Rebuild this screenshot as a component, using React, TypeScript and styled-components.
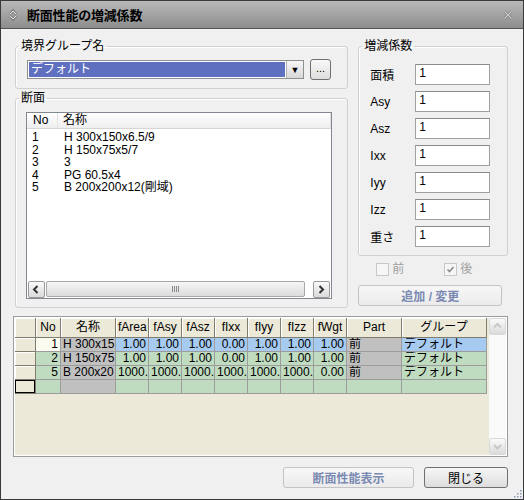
import { Fragment } from "react";
import styled, { createGlobalStyle } from "styled-components";

const GlobalStyle = createGlobalStyle`
  html, body {
    margin: 0;
    padding: 0;
    background: #f0f0f0;
  }
  body {
    font-family: "Liberation Sans", "Noto Sans CJK JP", sans-serif;
    font-size: 12px;
    color: #000;
  }
  * {
    box-sizing: border-box;
  }
`;

const Window = styled.div`
  position: relative;
  width: 524px;
  height: 500px;
  display: flex;
  flex-direction: column;
  background: #f0f0f0;
  border: 1px solid #3a3a3a;
`;

const TitleBar = styled.div`
  flex: none;
  height: 28px;
  display: flex;
  align-items: center;
  padding: 0 10px 0 7px;
  background: linear-gradient(#b9b9b9, #8d8d8d);
  border-bottom: 1px solid #555;
`;

const Title = styled.span`
  flex: 1;
  margin-left: 9px;
  font-size: 13px;
  font-weight: bold;
  letter-spacing: -0.2px;
`;

const Content = styled.div`
  flex: 1;
  display: flex;
  flex-direction: column;
  padding: 10px 15px 0 12px;
`;

const TopArea = styled.div`
  display: flex;
  gap: 10px;
  padding-left: 2px;
`;

const Column = styled.div<{ $width: number }>`
  width: ${(p) => p.$width}px;
  display: flex;
  flex-direction: column;
`;

const Group = styled.fieldset<{ $height: number; $gap?: number }>`
  margin: ${(p) => p.$gap ?? 0}px 0 0;
  padding: 0;
  min-width: 0;
  height: ${(p) => p.$height}px;
  border: 1px solid #d0d0d0;
  border-radius: 3px;
  box-shadow: inset 1px 1px 0 #fff;
`;

const Legend = styled.legend`
  margin-left: 3px;
  padding: 0 2px;
  line-height: 14px;
  font-size: 12px;
`;

const GroupBody = styled.div<{ $pad: string }>`
  padding: ${(p) => p.$pad};
`;

const ComboRow = styled.div`
  display: flex;
  align-items: center;
  gap: 6px;
`;

const Combo = styled.div`
  width: 277px;
  height: 19px;
  display: flex;
  border: 1px solid #8e8f8f;
  background: #fff;
`;

const ComboValue = styled.div`
  flex: 1;
  margin: 1px;
  padding-left: 2px;
  background: #6070c0;
  color: #fff;
  line-height: 15px;
`;

const ComboArrow = styled.div`
  width: 17px;
  display: flex;
  align-items: center;
  justify-content: center;
  border-left: 1px solid #b5b5b5;
  background: linear-gradient(#f6f6f6, #d8d8d8);
  font-size: 9px;
`;

const SmallButton = styled.div`
  width: 21px;
  height: 21px;
  display: flex;
  align-items: center;
  justify-content: center;
  border: 1px solid #707070;
  border-radius: 3px;
  background: linear-gradient(#f8f8f8, #dedede);
  font-size: 11px;
  padding-bottom: 3px;
`;

const ListBox = styled.div`
  width: 306px;
  height: 187px;
  display: flex;
  flex-direction: column;
  border: 1px solid #828790;
  background: #fff;
`;

const ListHead = styled.div`
  height: 16px;
  display: grid;
  grid-template-columns: 31px 1fr;
  background: linear-gradient(#fff, #eeeeee);
  border-bottom: 1px solid #d5d5d5;
  line-height: 15px;
`;

const HeadCell = styled.div<{ $pad: number }>`
  padding-left: ${(p) => p.$pad}px;
  border-right: 1px solid #e2e2e2;
`;

const ListRows = styled.div`
  flex: 1;
  padding-top: 2px;
`;

const ListRow = styled.div`
  height: 12.6px;
  display: grid;
  grid-template-columns: 31px 1fr;
  line-height: 12.6px;
`;

const ListCell = styled.div<{ $pad: number }>`
  padding-left: ${(p) => p.$pad}px;
  white-space: nowrap;
`;

const HScroll = styled.div`
  height: 17px;
  display: flex;
  align-items: stretch;
  padding: 0 1px 1px 1px;
  gap: 1px;
`;

const ScrollBtn = styled.div<{ $dim?: boolean }>`
  width: 17px;
  min-height: 17px;
  display: flex;
  align-items: center;
  justify-content: center;
  border: 1px solid ${(p) => (p.$dim ? "#d8d8d8" : "#9a9a9a")};
  border-radius: 2px;
  background: linear-gradient(#fafafa, #dadada);
`;

const Thumb = styled.div`
  width: 260px;
  display: flex;
  align-items: center;
  justify-content: center;
  border: 1px solid #a8a8a8;
  border-radius: 2px;
  background: linear-gradient(#f6f6f6, #dcdcdc);
  margin-right: 7px;
`;

const Grip = styled.div`
  width: 7px;
  height: 6px;
  background: repeating-linear-gradient(90deg, #8a8a8a 0 1px, transparent 1px 2px);
`;

const FactorGrid = styled.div`
  display: grid;
  grid-template-columns: 45px 75px;
  row-gap: 6px;
  align-items: center;
`;

const FactorLabel = styled.span`
  font-size: 12px;
`;

const FactorInput = styled.div`
  height: 21px;
  border: 1px solid #a0a0a0;
  border-top-color: #8a8a8a;
  background: #fff;
  padding: 0 3px;
  line-height: 16px;
`;

const CheckRow = styled.div`
  margin-top: 7px;
  display: flex;
  gap: 40px;
  padding-left: 18px;
  height: 13px;
`;

const CheckItem = styled.div`
  display: flex;
  align-items: center;
  gap: 3px;
  color: #a0a0a0;
  line-height: 13px;
`;

const CheckBox = styled.div`
  width: 13px;
  height: 13px;
  border: 1px solid #c8c8c8;
  background: #f6f6f6;
  display: flex;
  align-items: center;
  justify-content: center;
`;

const PushButton = styled.div<{ $width: number; $disabled?: boolean }>`
  width: ${(p) => p.$width}px;
  height: 21px;
  display: flex;
  align-items: center;
  justify-content: center;
  border: 1px solid ${(p) => (p.$disabled ? "#c4c4c4" : "#707070")};
  border-radius: 3px;
  background: ${(p) =>
    p.$disabled ? "linear-gradient(#f7f7f7, #ebebeb)" : "linear-gradient(#f6f6f6, #dddddd)"};
  color: ${(p) => (p.$disabled ? "#7b8ab2" : "#000")};
  font-weight: ${(p) => (p.$disabled ? "bold" : "normal")};
  font-size: 12px;
`;

const AddButton = styled(PushButton)`
  margin-top: 9px;
`;

const GridPanel = styled.div`
  margin-top: 8px;
  height: 141px;
  display: flex;
  border: 1px solid #9c9c9c;
  padding: 1px;
  background: #ece9d8;
  box-shadow: inset 0 0 0 1px #fff;
`;

const Sheet = styled.div`
  width: 472px;
  align-self: flex-start;
  display: grid;
  grid-template-columns: 21px 25px 55px repeat(7, 33px) 55px 85px;
  grid-template-rows: 20px repeat(4, 14px);
`;

type Tone = "head" | "rowhead" | "current" | "green" | "blue" | "gray" | "ivory";

const toneBg: Record<Tone, string> = {
  head: "#ece9d8",
  rowhead: "#ece9d8",
  current: "#ece9d8",
  green: "#c0dcc0",
  blue: "#a6caf0",
  gray: "#c0c0c0",
  ivory: "#fbfbf0",
};

const isHeader = (t: Tone) => t === "head" || t === "rowhead" || t === "current";

const Cell = styled.div<{ $tone: Tone; $align?: "left" | "right" | "center" }>`
  background: ${(p) => toneBg[p.$tone]};
  border-right: 1px solid ${(p) => (isHeader(p.$tone) ? "#7f7d70" : "#9c9c9c")};
  border-bottom: 1px solid ${(p) => (isHeader(p.$tone) ? "#7f7d70" : "#9c9c9c")};
  box-shadow: ${(p) =>
    p.$tone === "current"
      ? "inset 0 0 0 1px #000"
      : p.$tone === "head" || p.$tone === "rowhead"
      ? "inset 1px 1px 0 #fff"
      : "none"};
  text-align: ${(p) => p.$align ?? "left"};
  padding: 0 2px;
  font-size: 12px;
  line-height: ${(p) => (p.$tone === "head" ? "19px" : "13px")};
  white-space: nowrap;
  overflow: hidden;
`;

const VScroll = styled.div`
  width: 17px;
  margin-left: auto;
  display: flex;
  flex-direction: column;
  justify-content: space-between;
  background: #fafafa;
`;

const Footer = styled.div`
  margin-top: 10px;
  display: flex;
  justify-content: flex-end;
  gap: 10px;
`;

const ResizeGrip = styled.svg`
  position: absolute;
  right: 1px;
  bottom: 1px;
`;

const sections = [
  ["1", "H 300x150x6.5/9"],
  ["2", "H 150x75x5/7"],
  ["3", "3"],
  ["4", "PG 60.5x4"],
  ["5", "B 200x200x12(剛域)"],
];

const factors = ["面積", "Asy", "Asz", "Ixx", "Iyy", "Izz", "重さ"];

const headers = ["", "No", "名称", "fArea", "fAsy", "fAsz", "fIxx", "fIyy", "fIzz", "fWgt", "Part", "グループ"];

const rows = [
  { no: "1", name: "H 300x15", vals: ["1.00", "1.00", "1.00", "0.00", "1.00", "1.00", "1.00"], sel: true },
  { no: "2", name: "H 150x75", vals: ["1.00", "1.00", "1.00", "0.00", "1.00", "1.00", "1.00"], sel: false },
  { no: "5", name: "B 200x20", vals: ["1000.", "1000.", "1000.", "1000.", "1000.", "1000.", "0.00"], sel: false },
];

const Chevron = ({ dir, color = "#333" }: { dir: "left" | "right" | "up" | "down"; color?: string }) => {
  const d = {
    left: "M6.5 2 L3 5.5 L6.5 9",
    right: "M3.5 2 L7 5.5 L3.5 9",
    up: "M2 6.5 L5.5 3 L9 6.5",
    down: "M2 4 L5.5 7.5 L9 4",
  }[dir];
  return (
    <svg width="11" height="11" viewBox="0 0 11 11">
      <path d={d} fill="none" stroke={color} strokeWidth="2" />
    </svg>
  );
};

const App = () => {
  return (
    <>
      <GlobalStyle />
      <Window>
        <TitleBar>
          <svg width="10" height="12" viewBox="0 0 10 12">
            <path d="M2 5 L5 2 L8 5" fill="none" stroke="#444" strokeWidth="2.4" />
            <path d="M2 7 L5 10 L8 7" fill="none" stroke="#444" strokeWidth="2.4" />
            <path d="M2 5 L5 2 L8 5" fill="none" stroke="#eee" strokeWidth="1.1" />
            <path d="M2 7 L5 10 L8 7" fill="none" stroke="#eee" strokeWidth="1.1" />
          </svg>
          <Title>断面性能の増減係数</Title>
          <svg width="10" height="10" viewBox="0 0 10 10">
            <path d="M1.5 1.5 L8.5 8.5 M8.5 1.5 L1.5 8.5" stroke="#7c7c7c" strokeWidth="2.6" />
            <path d="M1.5 1.5 L8.5 8.5 M8.5 1.5 L1.5 8.5" stroke="#cfcfcf" strokeWidth="1.2" />
          </svg>
        </TitleBar>

        <Content>
          <TopArea>
            <Column $width={334}>
              <Group $height={50}>
                <Legend>境界グループ名</Legend>
                <GroupBody $pad="6px 0 0 11px">
                  <ComboRow>
                    <Combo>
                      <ComboValue>デフォルト</ComboValue>
                      <ComboArrow>▼</ComboArrow>
                    </Combo>
                    <SmallButton>...</SmallButton>
                  </ComboRow>
                </GroupBody>
              </Group>

              <Group $height={217} $gap={2}>
                <Legend>断面</Legend>
                <GroupBody $pad="7px 0 0 10px">
                  <ListBox>
                    <ListHead>
                      <HeadCell $pad={6}>No</HeadCell>
                      <HeadCell $pad={5}>名称</HeadCell>
                    </ListHead>
                    <ListRows>
                      {sections.map(([no, name]) => (
                        <ListRow key={no}>
                          <ListCell $pad={5}>{no}</ListCell>
                          <ListCell $pad={6}>{name}</ListCell>
                        </ListRow>
                      ))}
                    </ListRows>
                    <HScroll>
                      <ScrollBtn>
                        <Chevron dir="left" />
                      </ScrollBtn>
                      <Thumb>
                        <Grip />
                      </Thumb>
                      <ScrollBtn>
                        <Chevron dir="right" />
                      </ScrollBtn>
                    </HScroll>
                  </ListBox>
                </GroupBody>
              </Group>
            </Column>

            <Column $width={150}>
              <Group $height={217}>
                <Legend>増減係数</Legend>
                <GroupBody $pad="11px 0 0 11px">
                  <FactorGrid>
                    {factors.map((f) => (
                      <Fragment key={f}>
                        <FactorLabel>{f}</FactorLabel>
                        <FactorInput>1</FactorInput>
                      </Fragment>
                    ))}
                  </FactorGrid>
                </GroupBody>
              </Group>
              <CheckRow>
                <CheckItem>
                  <CheckBox />
                  前
                </CheckItem>
                <CheckItem>
                  <CheckBox>
                    <svg width="9" height="9" viewBox="0 0 9 9">
                      <path d="M1.5 4.5 L3.5 6.5 L7.5 2" fill="none" stroke="#8a8a8a" strokeWidth="1.6" />
                    </svg>
                  </CheckBox>
                  後
                </CheckItem>
              </CheckRow>
              <AddButton $width={144} $disabled>
                追加 / 変更
              </AddButton>
            </Column>
          </TopArea>

          <GridPanel>
            <Sheet>
              {headers.map((h, i) => (
                <Cell key={"h" + i} $tone="head" $align="center">
                  {h}
                </Cell>
              ))}
              {rows.map((r) => (
                <Fragment key={r.no}>
                  <Cell $tone="rowhead" />
                  <Cell $tone={r.sel ? "ivory" : "green"} $align="right">
                    {r.no}
                  </Cell>
                  <Cell $tone="gray">{r.name}</Cell>
                  {r.vals.map((v, i) => (
                    <Cell key={i} $tone={r.sel ? "blue" : "green"} $align="right">
                      {v}
                    </Cell>
                  ))}
                  <Cell $tone="gray">前</Cell>
                  <Cell $tone={r.sel ? "blue" : "green"}>デフォルト</Cell>
                </Fragment>
              ))}
              <Cell $tone="current" />
              <Cell $tone="green" />
              <Cell $tone="gray" />
              {Array.from({ length: 9 }).map((_, i) => (
                <Cell key={"e" + i} $tone="green" />
              ))}
            </Sheet>
            <VScroll>
              <ScrollBtn $dim>
                <Chevron dir="up" color="#c8c8c8" />
              </ScrollBtn>
              <ScrollBtn $dim>
                <Chevron dir="down" color="#c8c8c8" />
              </ScrollBtn>
            </VScroll>
          </GridPanel>

          <Footer>
            <PushButton $width={131} $disabled>
              断面性能表示
            </PushButton>
            <PushButton $width={84}>閉じる</PushButton>
          </Footer>
        </Content>

        <ResizeGrip width="10" height="10" viewBox="0 0 10 10">
          {[
            [8, 2],
            [5, 5],
            [8, 5],
            [2, 8],
            [5, 8],
            [8, 8],
          ].map(([x, y]) => (
            <rect key={`${x}-${y}`} x={x} y={y} width="1.5" height="1.5" fill="#8a9ab8" />
          ))}
        </ResizeGrip>
      </Window>
    </>
  );
};

export default App;
